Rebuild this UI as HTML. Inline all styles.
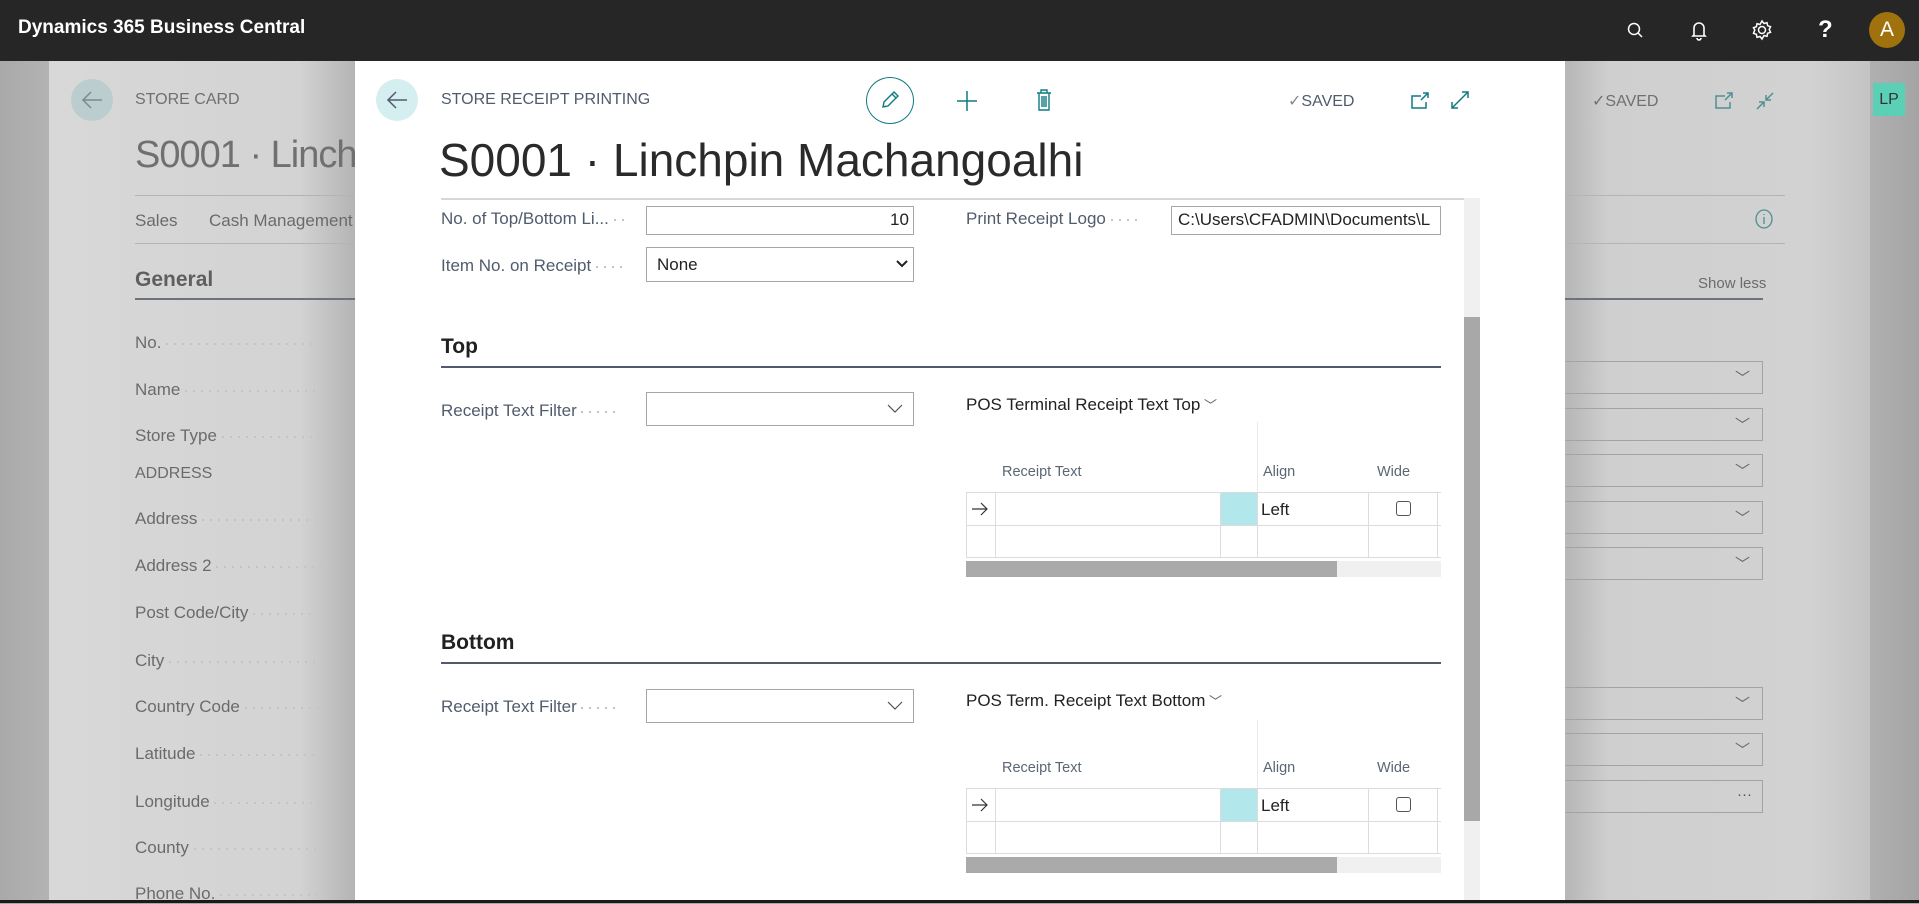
<!DOCTYPE html>
<html><head><meta charset="utf-8">
<style>
*{margin:0;padding:0;box-sizing:border-box}
body{width:1919px;height:903px;overflow:hidden;position:relative;font-family:"Liberation Sans",sans-serif;background:#a8a8a8}
.a{position:absolute;white-space:nowrap}
.top{left:0;top:0;width:1919px;height:61px;background:#262626}
.bg{left:49px;top:61px;width:1821px;height:842px;background:linear-gradient(90deg,#d8d8d8 0px,#d3d3d3 250px,#b4b4b4 306px,#b8b8b8 1520px,#cfcfcf 1560px,#d2d2d2 1760px,#c4c4c4 1821px)}
.rs{left:1870px;top:61px;width:49px;height:842px;background:linear-gradient(90deg,#b0b0b0,#a4a4a4)}
.bl{color:#6b6b6b;font-size:17px}
.modal{left:355px;top:61px;width:1210px;height:842px;background:#fff}
.lbl{color:#505c6d;font-size:17px}
.dots{display:inline-block;height:2px;vertical-align:middle;background:repeating-linear-gradient(90deg,#c4c4c4 0 2px,transparent 2px 8px)}
.inp{border:1px solid #a6a6a6;background:#fff}
.gl{background:#dcdcdc}
.hd{color:#5b6674;font-size:14.5px}
.sel{border:1px solid #a3a3a3}
</style></head><body>
<div class="a top"></div>
<div class="a" style="left:18px;top:17px;color:#fff;font-size:19px;font-weight:bold">Dynamics 365 Business Central</div>
<svg class="a" style="left:1624px;top:20px" width="22" height="22" viewBox="0 0 22 22" fill="none" stroke="#fff" stroke-width="1.5"><circle cx="10" cy="9" r="5.5"/><path d="M14 13l4 4"/></svg>
<svg class="a" style="left:1689px;top:19px" width="20" height="24" viewBox="0 0 20 24" fill="none" stroke="#fff" stroke-width="1.6"><path d="M5 16V9a5 5 0 0110 0v7l1 1H4z"/><path d="M8 19a2 2 0 004 0"/></svg>
<svg class="a" style="left:1750px;top:18px" width="24" height="24" viewBox="0 0 24 24" fill="none" stroke="#fff" stroke-width="1.5"><circle cx="12" cy="12" r="3.5"/><path d="M12 3l2 2.5 3-.8.6 3 2.9 1-1.3 2.8 1.3 2.8-2.9 1-.6 3-3-.8L12 21l-2-2.5-3 .8-.6-3-2.9-1L4.8 12 3.5 9.7l2.9-1 .6-3 3 .8z"/></svg>
<div class="a" style="left:1818px;top:16px;color:#fff;font-size:24px;font-weight:bold">?</div>
<div class="a" style="left:1869px;top:12px;width:36px;height:36px;border-radius:50%;background:#a0720e;color:#fff;font-size:21px;text-align:center;line-height:36px">A</div>

<div class="a bg"></div>
<div class="a rs"></div>
<div class="a" style="left:0;top:61px;width:49px;height:842px;background:linear-gradient(90deg,#a9a9a9,#b3b3b3)"></div>
<!-- background store card -->
<div class="a" style="left:71px;top:79px;width:42px;height:42px;border-radius:50%;background:#bccdd0"></div>
<svg class="a" style="left:80px;top:89px" width="24" height="22" viewBox="0 0 24 22" fill="none" stroke="#7a8a90" stroke-width="1.5"><path d="M22 11H3M11 3l-8 8 8 8"/></svg>
<div class="a bl" style="left:135px;top:91px;font-size:16px;color:#707070">STORE CARD</div>
<div class="a" style="left:135px;top:134px;font-size:38px;color:#707070;letter-spacing:-1px">S0001 · Linchp</div>
<div class="a" style="left:135px;top:195px;width:220px;height:1px;background:#b4b4b4"></div>
<div class="a bl" style="left:135px;top:211px">Sales</div>
<div class="a bl" style="left:209px;top:211px">Cash Management</div>
<div class="a" style="left:135px;top:243px;width:220px;height:1px;background:#b4b4b4"></div>
<div class="a" style="left:135px;top:268px;font-size:21px;font-weight:bold;color:#5f5f5f">General</div>
<div class="a" style="left:135px;top:298px;width:220px;height:2px;background:#6c737c"></div>
<div class="a bl" style="left:135px;top:333px">No. <span class="dots" style="width:150px"></span></div>
<div class="a bl" style="left:135px;top:380px">Name <span class="dots" style="width:140px"></span></div>
<div class="a bl" style="left:135px;top:426px">Store Type <span class="dots" style="width:100px"></span></div>
<div class="a bl" style="left:135px;top:465px;font-size:16px">ADDRESS</div>
<div class="a bl" style="left:135px;top:509px">Address <span class="dots" style="width:120px"></span></div>
<div class="a bl" style="left:135px;top:556px">Address 2 <span class="dots" style="width:110px"></span></div>
<div class="a bl" style="left:135px;top:603px">Post Code/City <span class="dots" style="width:70px"></span></div>
<div class="a bl" style="left:135px;top:651px">City <span class="dots" style="width:150px"></span></div>
<div class="a bl" style="left:135px;top:697px">Country Code <span class="dots" style="width:80px"></span></div>
<div class="a bl" style="left:135px;top:744px">Latitude <span class="dots" style="width:120px"></span></div>
<div class="a bl" style="left:135px;top:792px">Longitude <span class="dots" style="width:110px"></span></div>
<div class="a bl" style="left:135px;top:838px">County <span class="dots" style="width:130px"></span></div>
<div class="a bl" style="left:135px;top:884px">Phone No. <span class="dots" style="width:110px"></span></div>
<!-- right side store card -->
<div class="a" style="left:1592px;top:91px;font-size:16px;color:#707070">✓SAVED</div>
<svg class="a" style="left:1713px;top:90px" width="22" height="22" viewBox="0 0 22 22" fill="none" stroke="#4f8f93" stroke-width="1.5"><path d="M12 6H3v12h14v-6M14 3h5v5M19 3l-7 7"/></svg>
<svg class="a" style="left:1754px;top:90px" width="22" height="22" viewBox="0 0 22 22" fill="none" stroke="#4f8f93" stroke-width="1.5"><path d="M3 19l7-7M5 12h5v5M19 3l-7 7M17 10h-5V5"/></svg>
<div class="a" style="left:1873px;top:83px;width:32px;height:33px;background:#5cd0b7;color:#333;font-size:16px;text-align:center;line-height:33px">LP</div>
<div class="a" style="left:1565px;top:195px;width:220px;height:1px;background:#b4b4b4"></div>
<div class="a" style="left:1565px;top:243px;width:220px;height:1px;background:#b4b4b4"></div>
<svg class="a" style="left:1754px;top:208px" width="20" height="22" viewBox="0 0 20 22" fill="none" stroke="#4f8f93" stroke-width="1.3"><ellipse cx="10" cy="11" rx="8" ry="9"/><path d="M10 9v7M10 6v1"/></svg>
<div class="a" style="left:1698px;top:275px;font-size:15px;color:#6b6b6b">Show less</div>
<div class="a" style="left:1565px;top:298px;width:198px;height:2px;background:#6c737c"></div>
<div class="a sel" style="left:1540px;top:361px;width:223px;height:33px"></div>
<div class="a sel" style="left:1540px;top:408px;width:223px;height:33px"></div>
<div class="a sel" style="left:1540px;top:454px;width:223px;height:33px"></div>
<div class="a sel" style="left:1540px;top:501px;width:223px;height:33px"></div>
<div class="a sel" style="left:1540px;top:547px;width:223px;height:33px"></div>
<div class="a sel" style="left:1540px;top:687px;width:223px;height:33px"></div>
<div class="a sel" style="left:1540px;top:733px;width:223px;height:33px"></div>
<div class="a sel" style="left:1540px;top:780px;width:223px;height:33px"></div>
<div class="a" style="left:1735px;top:367px;color:#666;font-size:15px">﹀</div>
<div class="a" style="left:1735px;top:414px;color:#666;font-size:15px">﹀</div>
<div class="a" style="left:1735px;top:460px;color:#666;font-size:15px">﹀</div>
<div class="a" style="left:1735px;top:507px;color:#666;font-size:15px">﹀</div>
<div class="a" style="left:1735px;top:553px;color:#666;font-size:15px">﹀</div>
<div class="a" style="left:1735px;top:693px;color:#666;font-size:15px">﹀</div>
<div class="a" style="left:1735px;top:739px;color:#666;font-size:15px">﹀</div>
<div class="a" style="left:1737px;top:786px;color:#555;font-size:15px">···</div>

<!-- modal -->
<div class="a modal"></div>
<div class="a" style="left:376px;top:79px;width:42px;height:42px;border-radius:50%;background:#d5eef0"></div>
<svg class="a" style="left:385px;top:89px" width="24" height="22" viewBox="0 0 24 22" fill="none" stroke="#505c6d" stroke-width="1.5"><path d="M22 11H3M11 3l-8 8 8 8"/></svg>
<div class="a" style="left:441px;top:91px;font-size:16px;color:#505c6d">STORE RECEIPT PRINTING</div>
<div class="a" style="left:866px;top:77px;width:48px;height:47px;border-radius:50%;border:1.5px solid #0f7b82"></div>
<svg class="a" style="left:879px;top:89px" width="22" height="22" viewBox="0 0 22 22" fill="none" stroke="#0f7b82" stroke-width="1.4"><path d="M4 18l1-5 10-10 4 4-10 10z M13 5l4 4 M4 18l3-1"/></svg>
<svg class="a" style="left:955px;top:89px" width="24" height="24" viewBox="0 0 24 24" fill="none" stroke="#0f7b82" stroke-width="1.5"><path d="M12 2v20M2 12h20"/></svg>
<svg class="a" style="left:1034px;top:88px" width="20" height="24" viewBox="0 0 20 24" fill="none" stroke="#0f7b82" stroke-width="1.4"><path d="M3 5h14M7 5V2h6v3M5 5v17h10V5M8 8v11M10 8v11M12 8v11"/></svg>
<div class="a" style="left:1288px;top:91px;font-size:16px;color:#505c6d"><span style="color:#888">✓</span>SAVED</div>
<svg class="a" style="left:1409px;top:90px" width="22" height="22" viewBox="0 0 22 22" fill="none" stroke="#0f7b82" stroke-width="1.5"><path d="M12 6H3v12h14v-6M14 3h5v5M19 3l-7 7"/></svg>
<svg class="a" style="left:1449px;top:89px" width="22" height="22" viewBox="0 0 22 22" fill="none" stroke="#0f7b82" stroke-width="1.5"><path d="M3 19L19 3M13 3h6v6M3 13v6h6"/></svg>
<div class="a" style="left:439px;top:133px;font-size:46px;color:#2a2a2a;letter-spacing:0px">S0001 · Linchpin Machangoalhi</div>

<!-- content (clipped) -->
<div class="a" style="left:355px;top:198px;width:1125px;height:705px;overflow:hidden">
 <div class="a lbl" style="left:86px;top:11px">No. of Top/Bottom Li... <span class="dots" style="width:10px"></span></div>
 <div class="a inp" style="left:291px;top:8px;width:268px;height:29px"></div>
 <div class="a" style="left:535px;top:12px;font-size:17px;color:#222">10</div>
 <div class="a lbl" style="left:86px;top:58px">Item No. on Receipt <span class="dots" style="width:28px"></span></div>
 <div class="a inp" style="left:291px;top:49px;width:268px;height:35px"></div>
 <div class="a" style="left:302px;top:57px;font-size:17px;color:#222">None</div>
 <svg class="a" style="left:541px;top:61px" width="12" height="10" viewBox="0 0 12 10" fill="none" stroke="#222" stroke-width="2"><path d="M1 2l5 5 5-5"/></svg>
 <div class="a lbl" style="left:611px;top:11px">Print Receipt Logo <span class="dots" style="width:30px"></span></div>
 <div class="a inp" style="left:816px;top:8px;width:270px;height:29px;overflow:hidden"><span style="position:absolute;left:6px;top:3px;font-size:17px;color:#222">C:\Users\CFADMIN\Documents\L</span></div>
 <div class="a" style="left:86px;top:0;width:1039px;height:2px;background:#d4d8dc"></div>

 <div class="a" style="left:86px;top:137px;font-size:21px;font-weight:bold;color:#212121">Top</div>
 <div class="a" style="left:86px;top:168px;width:1000px;height:2px;background:#505c6d"></div>
 <div class="a lbl" style="left:86px;top:203px">Receipt Text Filter <span class="dots" style="width:38px"></span></div>
 <div class="a inp" style="left:291px;top:194px;width:268px;height:34px"></div>
 <svg class="a" style="left:532px;top:206px" width="16" height="10" viewBox="0 0 16 10" fill="none" stroke="#555" stroke-width="1.2"><path d="M1 1l7 7 7-7"/></svg>
 <div class="a" style="left:611px;top:197px;font-size:17px;color:#212121">POS Terminal Receipt Text Top<span style="color:#666;font-size:13px"> ﹀</span></div>
 <div class="a" style="left:902px;top:224px;width:1px;height:70px;background:#eaeaea"></div>
 <div class="a hd" style="left:647px;top:266px">Receipt Text</div>
 <div class="a hd" style="left:908px;top:266px">Align</div>
 <div class="a hd" style="left:1022px;top:266px">Wide</div>
 <div class="a" style="left:611px;top:294px;width:475px;height:66px;border-top:1px solid #dcdcdc;border-bottom:1px solid #dcdcdc;border-left:1px solid #dcdcdc"></div>
 <div class="a gl" style="left:611px;top:327px;width:475px;height:1px"></div>
 <div class="a" style="left:865px;top:295px;width:37px;height:32px;background:#b2e8ec"></div>
 <div class="a gl" style="left:640px;top:294px;width:1px;height:66px"></div>
 <div class="a gl" style="left:865px;top:294px;width:1px;height:66px"></div>
 <div class="a gl" style="left:902px;top:294px;width:1px;height:66px"></div>
 <div class="a gl" style="left:1013px;top:294px;width:1px;height:66px"></div>
 <div class="a gl" style="left:1082px;top:294px;width:1px;height:66px"></div>
 <svg class="a" style="left:616px;top:304px" width="18" height="14" viewBox="0 0 18 14" fill="none" stroke="#333" stroke-width="1.2"><path d="M1 7h15M10 1l6 6-6 6"/></svg>
 <div class="a" style="left:906px;top:302px;font-size:17px;color:#222">Left</div>
 <div class="a" style="left:1041px;top:303px;width:15px;height:15px;border:1px solid #555;border-radius:3px"></div>
 <div class="a" style="left:611px;top:363px;width:475px;height:16px;background:#f0f0f0"></div>
 <div class="a" style="left:611px;top:363px;width:371px;height:16px;background:#aaaaaa"></div>

 <div class="a" style="left:86px;top:433px;font-size:21px;font-weight:bold;color:#212121">Bottom</div>
 <div class="a" style="left:86px;top:464px;width:1000px;height:2px;background:#505c6d"></div>
 <div class="a lbl" style="left:86px;top:499px">Receipt Text Filter <span class="dots" style="width:38px"></span></div>
 <div class="a inp" style="left:291px;top:491px;width:268px;height:34px"></div>
 <svg class="a" style="left:532px;top:503px" width="16" height="10" viewBox="0 0 16 10" fill="none" stroke="#555" stroke-width="1.2"><path d="M1 1l7 7 7-7"/></svg>
 <div class="a" style="left:611px;top:493px;font-size:17px;color:#212121">POS Term. Receipt Text Bottom<span style="color:#666;font-size:13px"> ﹀</span></div>
 <div class="a" style="left:902px;top:522px;width:1px;height:68px;background:#eaeaea"></div>
 <div class="a hd" style="left:647px;top:562px">Receipt Text</div>
 <div class="a hd" style="left:908px;top:562px">Align</div>
 <div class="a hd" style="left:1022px;top:562px">Wide</div>
 <div class="a" style="left:611px;top:590px;width:475px;height:66px;border-top:1px solid #dcdcdc;border-bottom:1px solid #dcdcdc;border-left:1px solid #dcdcdc"></div>
 <div class="a gl" style="left:611px;top:623px;width:475px;height:1px"></div>
 <div class="a" style="left:865px;top:591px;width:37px;height:32px;background:#b2e8ec"></div>
 <div class="a gl" style="left:640px;top:590px;width:1px;height:66px"></div>
 <div class="a gl" style="left:865px;top:590px;width:1px;height:66px"></div>
 <div class="a gl" style="left:902px;top:590px;width:1px;height:66px"></div>
 <div class="a gl" style="left:1013px;top:590px;width:1px;height:66px"></div>
 <div class="a gl" style="left:1082px;top:590px;width:1px;height:66px"></div>
 <svg class="a" style="left:616px;top:600px" width="18" height="14" viewBox="0 0 18 14" fill="none" stroke="#333" stroke-width="1.2"><path d="M1 7h15M10 1l6 6-6 6"/></svg>
 <div class="a" style="left:906px;top:598px;font-size:17px;color:#222">Left</div>
 <div class="a" style="left:1041px;top:599px;width:15px;height:15px;border:1px solid #555;border-radius:3px"></div>
 <div class="a" style="left:611px;top:659px;width:475px;height:16px;background:#f0f0f0"></div>
 <div class="a" style="left:611px;top:659px;width:371px;height:16px;background:#aaaaaa"></div>

 <div class="a" style="left:1109px;top:0;width:16px;height:705px;background:#f0f0f0"></div>
 <div class="a" style="left:1109px;top:119px;width:16px;height:504px;background:#a8a8a8"></div>
</div>
<div class="a" style="left:0;top:900px;width:1919px;height:3px;background:#1a1a1a"></div>
</body></html>
